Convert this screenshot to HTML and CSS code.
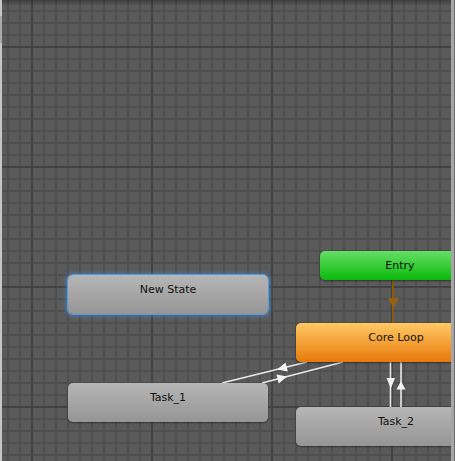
FILE: index.html
```html
<!DOCTYPE html>
<html lang="en">
<head>
    <meta charset="UTF-8">
    <title>Animator</title>
    <link rel="stylesheet" href="styles.css">
</head>
<body>
    <div class="window">
        <div class="edge-left"><span class="edge-handle"></span></div>

        <div class="graph">
            <svg class="links" width="449" height="461" viewBox="2 0 449 461">
                <!-- Entry -> Core Loop -->
                <line x1="393" y1="280" x2="393" y2="323" class="link-entry"/>
                <polygon points="388,298 399,298 393.5,308" class="arrow-entry"/>

                <!-- Core Loop -> Task_1 -->
                <line x1="222" y1="383" x2="307" y2="362" class="link"/>
                <polygon points="277,369.4 287.8,371.4 285.6,362.6" class="arrow"/>

                <!-- Task_1 -> Core Loop -->
                <line x1="262" y1="383" x2="343" y2="362" class="link"/>
                <polygon points="287.3,376.5 278.7,383.4 276.5,374.6" class="arrow"/>

                <!-- Core Loop <-> Task_2 -->
                <line x1="390.5" y1="362" x2="390.5" y2="407" class="link"/>
                <polygon points="386.5,378 395,378 390.8,388.5" class="arrow"/>
                <line x1="401" y1="362" x2="401" y2="407" class="link"/>
                <polygon points="396.5,389.5 405.5,389.5 401,381" class="arrow"/>
            </svg>

            <div class="node node-entry" style="left: 318px; top: 251px;">Entry</div>
            <div class="node node-selected" style="left: 66px; top: 275px;">New State</div>
            <div class="node node-default" style="left: 294px; top: 323px;">Core Loop</div>
            <div class="node" style="left: 66px; top: 383px;">Task_1</div>
            <div class="node" style="left: 294px; top: 407px;">Task_2</div>
        </div>

        <div class="edge-right"></div>
    </div>
</body>
</html>
```

FILE: styles.css
```css
body {
    margin: 0;
    font-family: 'DejaVu Sans', Verdana, sans-serif;
    background: #585858;
    overflow: hidden;
}
.window {
    display: flex;
    width: 455px;
    height: 461px;
}
.edge-left {
    width: 2px;
    background: #c6c6c6;
    padding-top: 16px;
}
.edge-handle {
    display: block;
    height: 27px;
    background: #a9a9a9;
}
.edge-right {
    width: 3px;
    background: #a6a6a6;
    border-right: 1px solid #6a6a6a;
}
.graph {
    flex: 1;
    position: relative;
    overflow: hidden;
    background-color: #5a5a5a;
    background-image:
        linear-gradient(to right, #424242 2px, transparent 2px),
        linear-gradient(to bottom, #424242 2px, transparent 2px),
        linear-gradient(to right, #4f4f4f 2px, transparent 2px),
        linear-gradient(to bottom, #4f4f4f 2px, transparent 2px);
    background-size: 120px 120px, 120px 120px, 12px 12px, 12px 12px;
    background-position: 29px 46px, 29px 46px, 5px 10px, 5px 10px;
}
.graph::before {
    content: "";
    position: absolute;
    top: 0;
    left: 0;
    right: 0;
    height: 6px;
    background: linear-gradient(rgba(0,0,0,0.3), rgba(0,0,0,0));
}
.links {
    position: absolute;
    top: 0;
    left: 0;
}
.link {
    stroke: #e8e8e8;
    stroke-width: 1.6;
}
.arrow {
    fill: #f2f2f2;
}
.link-entry {
    stroke: #8a5a12;
    stroke-width: 2;
}
.arrow-entry {
    fill: #96620f;
}
.node {
    position: absolute;
    width: 200px;
    height: 39px;
    box-sizing: border-box;
    padding-top: 8px;
    border-radius: 5px;
    font-size: 11px;
    line-height: 14px;
    text-align: center;
    color: #111;
    background: linear-gradient(#b6b6b6, #959595);
    box-shadow: 0 1px 2px rgba(0,0,0,0.45);
}
.node-selected {
    box-shadow: 0 0 0 1px #4e9be2, 0 0 4px 2px rgba(70,150,230,0.55);
}
.node-default {
    background: linear-gradient(#ffc964, #e8790a);
}
.node-entry {
    width: 160px;
    height: 29px;
    background: linear-gradient(#66de66, #0aba0a);
}
```
